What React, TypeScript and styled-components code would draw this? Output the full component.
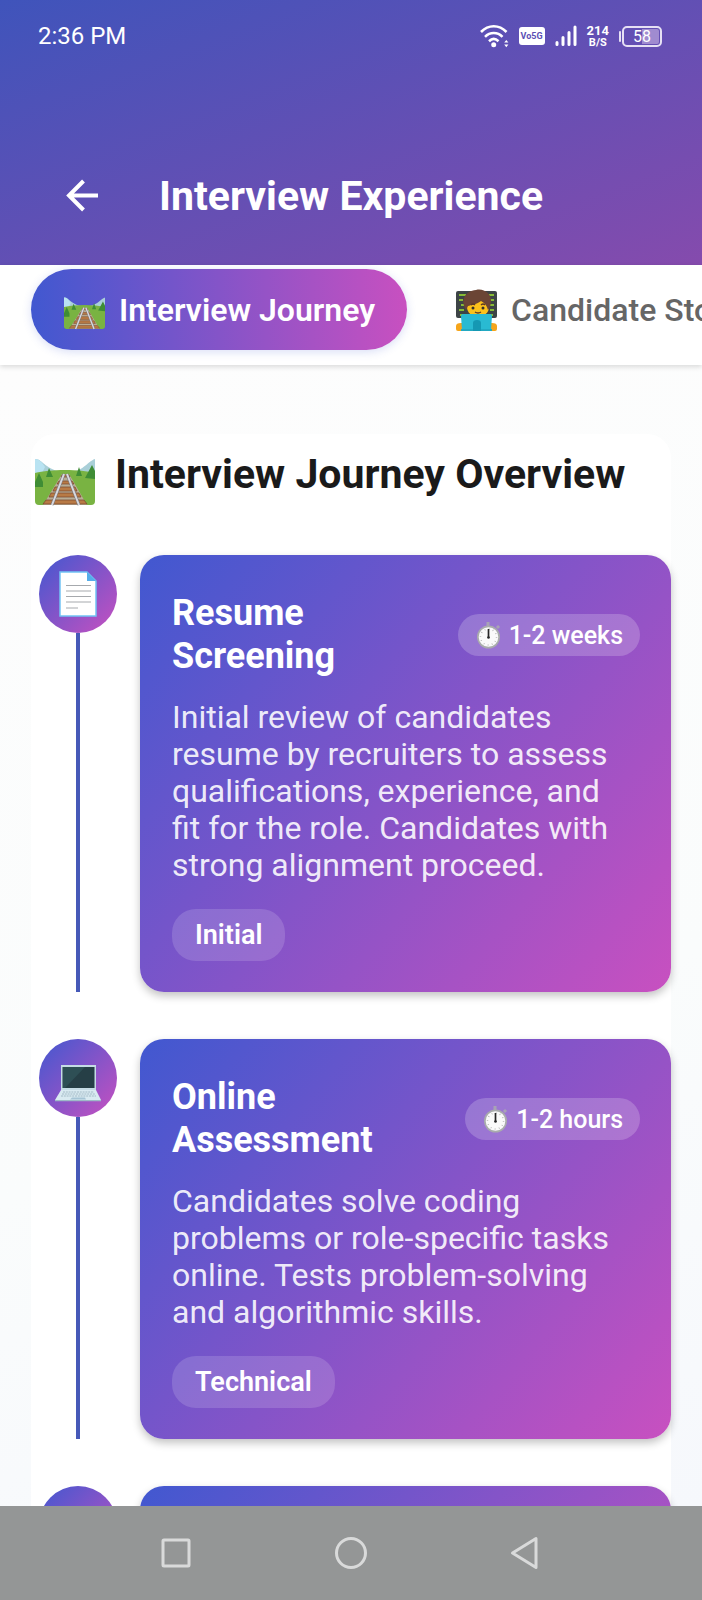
import React from "react";
import styled, { createGlobalStyle } from "styled-components";

const Global = createGlobalStyle`
  * { box-sizing: border-box; }
  body { margin: 0; font-family: Roboto, sans-serif; }
  button { font-family: inherit; border: 0; padding: 0; background: none; }
  h1, h2, h3, p, ol { margin: 0; padding: 0; font-weight: inherit; }
  svg { display: block; flex: none; overflow: visible; }
`;

const Screen = styled.div`
  display: flex;
  flex-direction: column;
  height: 100vh;
  overflow: hidden;
  background: #fff;
`;

const Header = styled.header`
  flex: none;
  background: linear-gradient(to bottom right, #3f54bb, #854bad);
  color: #fff;
`;

const StatusBar = styled.div`
  display: flex;
  align-items: center;
  justify-content: space-between;
  height: 72px;
  padding: 0 40px 0 38px;
`;

const Clock = styled.time`
  font-size: 24px;
  line-height: 28px;
`;

const StatusIcons = styled.div`
  display: flex;
  align-items: center;
  gap: 10px;
`;

const NetworkBadge = styled.span`
  padding: 0 2px;
  border-radius: 3px;
  background: #fff;
  color: #5c50b5;
  font-size: 9px;
  font-weight: 700;
  line-height: 18px;
`;

const Speed = styled.span`
  font-size: 13px;
  font-weight: 700;
  line-height: 13px;
  text-align: center;
`;

const SpeedUnit = styled.span`
  display: block;
  font-size: 11px;
  line-height: 11px;
`;

const Battery = styled.span`
  display: flex;
  align-items: center;
  gap: 1px;
  &::before {
    content: "";
    width: 2px;
    height: 11px;
    border-radius: 1px;
    background: #e6e0f4;
  }
`;

const BatteryBody = styled.span`
  width: 40px;
  height: 21px;
  padding: 1px;
  border: 2px solid #e6e0f4;
  border-radius: 5px;
  background: linear-gradient(90deg, transparent 50%, #a08bd0 50%) content-box;
  font-size: 16px;
  line-height: 15px;
  text-align: center;
`;

const TitleBar = styled.div`
  display: flex;
  align-items: center;
  gap: 54px;
  padding: 98px 60px 42px;
`;

const BackButton = styled.button`
  display: flex;
  color: inherit;
`;

const PageTitle = styled.h1`
  font-size: 41px;
  font-weight: 700;
  line-height: 53px;
`;

const TabsShadow = styled.div`
  position: relative;
  z-index: 1;
  box-shadow: 0 2px 5px rgba(0, 0, 0, 0.14);
`;

const Tabs = styled.nav`
  display: flex;
  gap: 16px;
  padding: 4px 31px 15px;
  overflow: hidden;
  background: #fff;
`;

const Tab = styled.button<{ $active?: boolean }>`
  display: flex;
  flex: none;
  align-items: center;
  gap: 14px;
  height: 81px;
  padding: 2px 32px 0 33px;
  border-radius: 41px;
  background: ${(p) => (p.$active ? "linear-gradient(90deg, #4158d0, #c850c0)" : "none")};
  box-shadow: ${(p) => (p.$active ? "0 2px 10px rgba(65, 88, 208, 0.2)" : "none")};
  color: ${(p) => (p.$active ? "#fff" : "#666")};
  font-size: 32px;
  font-weight: ${(p) => (p.$active ? 600 : 500)};
  line-height: 37px;
  white-space: nowrap;
`;

const Content = styled.main`
  flex: 1;
  min-height: 0;
  padding: 69px 31px 0;
  overflow: hidden;
  background: linear-gradient(160deg, #fdfdfd, #fafcfc 60%, #f6f8fc);
`;

const Panel = styled.section`
  border-radius: 24px;
  background: #fff;
`;

const PanelHeading = styled.div`
  display: flex;
  align-items: flex-start;
  gap: 20px;
  padding: 10px 4px 47px;
`;

const HeadingIcon = styled.div`
  padding-top: 4px;
`;

const PanelTitle = styled.h2`
  color: #1a1a1a;
  font-size: 41px;
  font-weight: 700;
  line-height: 60px;
  white-space: nowrap;
`;

const Timeline = styled.ol`
  display: flex;
  flex-direction: column;
  gap: 47px;
  list-style: none;
`;

const Step = styled.li`
  display: flex;
  gap: 23px;
`;

const Rail = styled.div`
  display: flex;
  flex: none;
  flex-direction: column;
  align-items: center;
  padding-left: 8px;
  &::after {
    content: "";
    flex: 1;
    width: 4px;
    background: #4659b8;
  }
`;

const StepIcon = styled.div`
  display: grid;
  place-items: center;
  width: 78px;
  height: 78px;
  border-radius: 50%;
  background: linear-gradient(135deg, #4158d0, #c850c0);
`;

const Card = styled.article`
  display: flex;
  flex: 1;
  flex-direction: column;
  align-items: flex-start;
  min-width: 0;
  min-height: 240px;
  padding: 37px 31px 31px 32px;
  border-radius: 24px;
  background: linear-gradient(130deg, #4158d0, #c850c0);
  box-shadow: 0 4px 8px rgba(0, 0, 0, 0.24);
  color: #fff;
`;

const CardTop = styled.div`
  display: flex;
  align-items: center;
  align-self: stretch;
  justify-content: space-between;
  gap: 16px;
`;

const CardTitle = styled.h3`
  flex: 1;
  max-width: 220px;
  font-size: 36px;
  font-weight: 700;
  line-height: 43px;
`;

const Duration = styled.span`
  display: flex;
  align-items: center;
  gap: 8px;
  height: 42px;
  padding: 0 17px 0 18px;
  border-radius: 21px;
  background: rgba(255, 255, 255, 0.2);
  font-size: 25px;
  font-weight: 500;
  white-space: nowrap;
`;

const Description = styled.p`
  padding: 21px 16px 25px 0;
  color: rgba(255, 255, 255, 0.9);
  font-size: 32px;
  line-height: 37px;
`;

const Tag = styled.span`
  padding: 0 23px;
  border-radius: 24px;
  background: rgba(255, 255, 255, 0.15);
  font-size: 27px;
  font-weight: 600;
  line-height: 52px;
`;

const SystemNav = styled.nav`
  position: relative;
  z-index: 1;
  display: grid;
  flex: none;
  grid-template-columns: repeat(3, 1fr);
  align-items: center;
  height: 94px;
  padding: 0 12.5%;
  background: #949696;
`;

const NavButton = styled.button`
  display: flex;
  justify-content: center;
`;

const Wifi = () => (
  <svg width="29" height="24" viewBox="0 0 29 24" fill="none" stroke="#fff" strokeWidth="2.6">
    <path d="M1 8C8.500 .3 19 .3 26.500 8M5 12.800c5-5 12.500-5 17.500 0M9 17.200c3-2.800 6.500-2.800 9.500 0" />
    <circle cx="13.700" cy="20.800" r="2.500" fill="#fff" stroke="none" />
    <path d="M24.200 18.500l2.100-2.600 2.100 2.600zM24.200 20.600l2.100 2.600 2.100-2.600z" fill="#fff" stroke="none" />
  </svg>
);

const Signal = () => (
  <svg width="22" height="22" viewBox="0 0 22 22" stroke="#fff" strokeWidth="3" strokeLinecap="round">
    <path d="M2 17.500v2M8 12.500v7M14 7.500v12M20 2v17.500" />
  </svg>
);

const BackArrow = () => (
  <svg width="45" height="45" viewBox="0 0 45 45" fill="none" stroke="#fff" strokeWidth="4">
    <path d="M38 21.500H9M23.500 7 9 21.500 23.500 36" />
  </svg>
);

const Track = ({ size }: { size: number }) => (
  <svg width={size} height={size} viewBox="0 0 60 60">
    <path d="M0 11c7-1 11 12 29 13C49 25 51 14 60 11v21H0z" fill="#a9cfd8" />
    <path d="M0 11c4 0 7 3 10 8L7 25H0z" fill="#b9e3f2" />
    <path d="M0 25c15-4 45-4 60 0v28q0 4-4 4H4q-4 0-4-4z" fill="#79b342" />
    <path d="M0 34l4-9 4 9v5H0zM11 29l3-9 4 9zM41 28l3-9 3 9zM50 30l7-13 3 6v8z" fill="#3f8d35" />
    <path d="M27 26h7l18 31H8z" fill="#b9ad95" />
    <path d="M27 27h7l1 2H26zM24 33h13l2 3H22zM20 39h20l2 4H18zM16 45h28l2 4H14zM11 52h38l3 4H8z" fill="#b87a45" stroke="#76452b" strokeWidth=".7" />
    <path d="M29 26 17 57M32 26l12 31" fill="none" stroke="#77757a" strokeWidth="3" />
    <path d="M29 26 17 57M32 26l12 31" fill="none" stroke="#d9d9de" strokeWidth="2" />
  </svg>
);

const Coder = () => (
  <svg width="41" height="41" viewBox="0 0 41 41">
    <rect y="1" width="41" height="27" rx="2" fill="#3d4446" />
    <path d="M3 5h7M13 5h3M25 5h5M33 5h5M3 10h4M34 10h4M5 15h4M32 15h6M3 20h5M34 20h4M4 25h5M32 25h5" stroke="#87bb35" strokeWidth="2" />
    <path d="M0 39v-3q0-3 5-3h31q5 0 5 3v3q0 2-2 2H2q-2 0-2-2z" fill="#f6a51b" />
    <ellipse cx="22" cy="17" rx="11" ry="10" fill="#fcc21b" />
    <path d="M10 20C4 10 9 1 20 0c8-2 15 4 15 10 0 4-1 8-3 10-1-4-3-7-7-9-5 4-10 4-13 5z" fill="#6b4535" />
    <path d="M15 15q2-2 4 0M25 15q2-2 4 0M19 22q3 2 6 0" stroke="#5c3928" fill="none" strokeWidth="1.300" />
    <circle cx="17" cy="18" r="1.500" fill="#35302c" />
    <circle cx="27" cy="18" r="1.500" fill="#35302c" />
    <path d="M7 24h27q2 0 2 2l-1 14H6L5 26q0-2 2-2z" fill="#29bad2" />
    <path d="M5 39h31v2H5z" fill="#22a9c2" />
    <path d="M17 41V33q0-3 4-3t4 3v8z" fill="#1598b3" />
  </svg>
);

const Page = () => (
  <svg width="38" height="46" viewBox="0 0 38 46">
    <path d="M1 1h27l9 9v35H1z" fill="#fff" stroke="#72c3f5" strokeWidth="1.500" />
    <path d="M28 1l9 9h-9z" fill="#55adea" />
    <path d="M7 14.500h25M7 20h25M7 25.500h25M7 31h25M7 37h12" stroke="#a6a9ad" strokeWidth="1" />
  </svg>
);

const Laptop = () => (
  <svg width="46" height="46" viewBox="0 -10 46 46">
    <path d="M6 0h35v25H6z" fill="#c5dce5" />
    <path d="M7.500 2h32v21h-32z" fill="#263f46" />
    <path d="M8 2h22L10 23H8z" fill="#2e4f55" />
    <path d="M6 25h35l5 10v1H0v-1z" fill="#d9eaf1" />
    <path d="M8 27h31M7 29h33M6 31h35" stroke="#a3bac6" strokeWidth="1" strokeDasharray="2 .8" />
    <path d="M17 32.500h13l1 2H15z" fill="#a6c4d5" />
    <path d="M0 35h46v1.300H0z" fill="#9dbac7" />
  </svg>
);

const Stopwatch = () => (
  <svg width="25" height="28" viewBox="0 0 25 28">
    <path d="M12 1v4M21 5l2 2" stroke="#a8a3b5" strokeWidth="3" />
    <circle cx="12.500" cy="16" r="11.500" fill="#a9acac" />
    <circle cx="12.500" cy="16" r="9.800" fill="#fafafa" />
    <circle cx="12.500" cy="16" r="8" fill="none" stroke="#aaa" strokeWidth="1.500" strokeDasharray=".7 3.490" />
    <path d="M12.500 8v9" stroke="#272727" strokeWidth="1.700" />
    <circle cx="12.500" cy="16.500" r="1.300" fill="#272727" />
  </svg>
);

type StepData = {
  icon?: React.ReactNode;
  title?: string;
  duration?: string;
  text?: string;
  tag?: string;
};

const steps: StepData[] = [
  {
    icon: <Page />,
    title: "Resume Screening",
    duration: "1-2 weeks",
    text: "Initial review of candidates resume by recruiters to assess qualifications, experience, and fit for the role. Candidates with strong alignment proceed.",
    tag: "Initial",
  },
  {
    icon: <Laptop />,
    title: "Online Assessment",
    duration: "1-2 hours",
    text: "Candidates solve coding problems or role-specific tasks online. Tests problem-solving and algorithmic skills.",
    tag: "Technical",
  },
  {},
];

export default function App() {
  return (
    <Screen>
      <Global />
      <Header>
        <StatusBar>
          <Clock>2:36 PM</Clock>
          <StatusIcons>
            <Wifi />
            <NetworkBadge>Vo5G</NetworkBadge>
            <Signal />
            <Speed>
              214<SpeedUnit>B/S</SpeedUnit>
            </Speed>
            <Battery>
              <BatteryBody>58</BatteryBody>
            </Battery>
          </StatusIcons>
        </StatusBar>
        <TitleBar>
          <BackButton type="button" aria-label="Back">
            <BackArrow />
          </BackButton>
          <PageTitle>Interview Experience</PageTitle>
        </TitleBar>
      </Header>
      <TabsShadow>
        <Tabs>
          <Tab type="button" $active>
            <Track size={41} />
            Interview Journey
          </Tab>
          <Tab type="button">
            <Coder />
            Candidate Stories
          </Tab>
        </Tabs>
      </TabsShadow>
      <Content>
        <Panel>
          <PanelHeading>
            <HeadingIcon>
              <Track size={60} />
            </HeadingIcon>
            <PanelTitle>Interview Journey Overview</PanelTitle>
          </PanelHeading>
          <Timeline>
            {steps.map((step, i) => (
              <Step key={i}>
                <Rail>
                  <StepIcon>{step.icon}</StepIcon>
                </Rail>
                <Card>
                  {step.title && (
                    <>
                      <CardTop>
                        <CardTitle>{step.title}</CardTitle>
                        <Duration>
                          <Stopwatch />
                          {step.duration}
                        </Duration>
                      </CardTop>
                      <Description>{step.text}</Description>
                      <Tag>{step.tag}</Tag>
                    </>
                  )}
                </Card>
              </Step>
            ))}
          </Timeline>
        </Panel>
      </Content>
      <SystemNav>
        <NavButton type="button" aria-label="Recent apps">
          <svg width="32" height="32" viewBox="0 0 32 32" fill="none" stroke="#d9dada" strokeWidth="3">
            <rect x="3" y="3" width="26" height="26" rx="1" />
          </svg>
        </NavButton>
        <NavButton type="button" aria-label="Home">
          <svg width="32" height="32" viewBox="0 0 32 32" fill="none" stroke="#d9dada" strokeWidth="3">
            <circle cx="16" cy="16" r="14.500" />
          </svg>
        </NavButton>
        <NavButton type="button" aria-label="Back">
          <svg width="32" height="32" viewBox="0 0 32 32" fill="none" stroke="#d9dada" strokeWidth="3" strokeLinejoin="round">
            <path d="M25 1.500v29L1.500 16z" />
          </svg>
        </NavButton>
      </SystemNav>
    </Screen>
  );
}
